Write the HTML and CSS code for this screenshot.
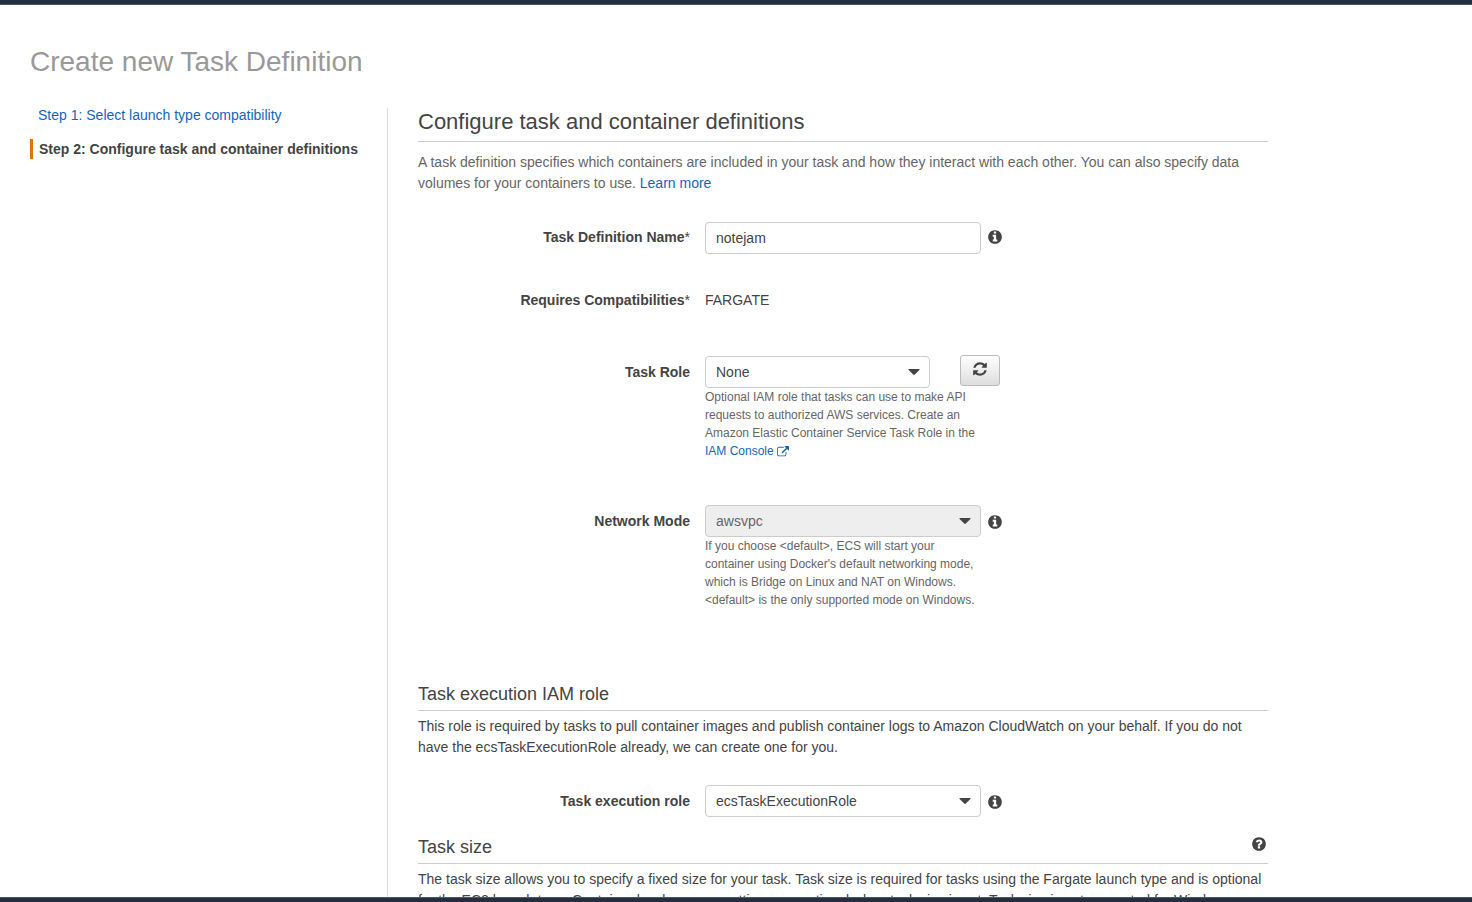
FILE: index.html
```html
<!DOCTYPE html>
<html lang="en">
<head>
<meta charset="utf-8">
<title>Create new Task Definition</title>
<link rel="stylesheet" href="styles.css">
</head>
<body>
<svg class="sprite" aria-hidden="true">
  <symbol id="info" viewBox="0 0 1792 1792"><path d="M1152 1376v-160q0-14-9-23t-23-9h-96v-512q0-14-9-23t-23-9h-320q-14 0-23 9t-9 23v160q0 14 9 23t23 9h96v320h-96q-14 0-23 9t-9 23v160q0 14 9 23t23 9h448q14 0 23-9t9-23zm-128-896v-160q0-14-9-23t-23-9h-192q-14 0-23 9t-9 23v160q0 14 9 23t23 9h192q14 0 23-9t9-23zm640 416q0 209-103 385.5t-279.5 279.5-385.5 103-385.5-103-279.5-279.5-103-385.5 103-385.5 279.5-279.5 385.5-103 385.5 103 279.5 279.5 103 385.5z"/></symbol>
  <symbol id="question" viewBox="0 0 1792 1792"><path d="M1024 1376v-192q0-14-9-23t-23-9h-192q-14 0-23 9t-9 23v192q0 14 9 23t23 9h192q14 0 23-9t9-23zm256-672q0-88-55.5-163t-138.5-116-170-41q-243 0-371 213-15 24 8 42l132 100q7 6 19 6 16 0 25-12 53-68 86-92 34-24 86-24 48 0 85.5 26t37.5 59q0 38-20 61t-68 45q-63 28-115.5 86.5t-52.5 125.5v36q0 14 9 23t23 9h192q14 0 23-9t9-23q0-19 21.5-49.5t54.5-49.5q32-18 49-28.5t46-35 44.5-48 28-60.5 12.5-81zm384 192q0 209-103 385.5t-279.5 279.5-385.5 103-385.5-103-279.5-279.5-103-385.5 103-385.5 279.5-279.5 385.5-103 385.5 103 279.5 279.5 103 385.5z"/></symbol>
  <symbol id="refresh" viewBox="0 0 1792 1792"><path d="M1639 1056q0 5-1 7-64 268-268 434.5t-478 166.5q-146 0-282.5-55t-243.5-157l-129 129q-19 19-45 19t-45-19-19-45v-448q0-26 19-45t45-19h448q26 0 45 19t19 45-19 45l-137 137q71 66 161 102t187 36q134 0 250-65t186-179q11-17 53-117 8-23 30-23h192q13 0 22.5 9.5t9.5 22.5zm25-800v448q0 26-19 45t-45 19h-448q-26 0-45-19t-19-45 19-45l138-138q-148-137-349-137-134 0-250 65t-186 179q-11 17-53 117-8 23-30 23h-199q-13 0-22.5-9.5t-9.5-22.5v-7q65-268 270-434.5t480-166.5q146 0 284 55.5t245 156.5l130-129q19-19 45-19t45 19 19 45z"/></symbol>
  <symbol id="external" viewBox="0 0 1792 1792"><path d="M1408 928v320q0 119-84.5 203.5t-203.5 84.5h-832q-119 0-203.5-84.5t-84.5-203.5v-832q0-119 84.5-203.5t203.5-84.5h704q14 0 23 9t9 23v64q0 14-9 23t-23 9h-704q-66 0-113 47t-47 113v832q0 66 47 113t113 47h832q66 0 113-47t47-113v-320q0-14 9-23t23-9h64q14 0 23 9t9 23zm384-864v512q0 26-19 45t-45 19-45-19l-176-176-652 652q-10 10-23 10t-23-10l-114-114q-10-10-10-23t10-23l652-652-176-176q-19-19-19-45t19-45 45-19h512q26 0 45 19t19 45z"/></symbol>
  <symbol id="caret" viewBox="0 0 12 6"><path d="M1 0h10q1 .3.4 1L6.8 5.6q-.8.7-1.6 0L.6 1Q0 .3 1 0z"/></symbol>
</svg>

<div class="page">
  <h1 class="page-title">Create new Task Definition</h1>
  <div class="wizard">
    <nav class="steps" aria-label="Steps">
      <a class="step" href="#step1">Step 1: Select launch type compatibility</a>
      <span class="step step-current" aria-current="step">Step 2: Configure task and container definitions</span>
    </nav>

    <main class="content">
      <h2 class="title">Configure task and container definitions</h2>
      <p class="intro">A task definition specifies which containers are included in your task and how they interact with each other. You can also specify data volumes for your containers to use. <a href="#learn">Learn more</a></p>

      <form class="form">
        <div class="row row-name">
          <label class="label" for="name">Task Definition Name<span class="star">*</span></label>
          <input class="control" id="name" type="text" value="notejam">
          <button class="hint" type="button" aria-label="About the task definition name"><svg class="icon"><use href="#info"/></svg></button>
        </div>

        <div class="row row-compat">
          <span class="label">Requires Compatibilities<span class="star">*</span></span>
          <span class="value">FARGATE</span>
        </div>

        <div class="row row-picker row-role">
          <label class="label" for="role">Task Role</label>
          <div class="field">
            <div class="picker picker-narrow">
              <select class="control" id="role"><option>None</option></select>
              <svg class="caret"><use href="#caret"/></svg>
            </div>
            <p class="help">Optional IAM role that tasks can use to make API requests to authorized AWS services. Create an Amazon Elastic Container Service Task Role in the <a href="#iam">IAM Console <svg class="external"><use href="#external"/></svg></a></p>
          </div>
          <button class="refresh" type="button" aria-label="Refresh roles"><svg class="icon"><use href="#refresh"/></svg></button>
        </div>

        <div class="row row-picker row-network">
          <label class="label" for="network">Network Mode</label>
          <div class="field">
            <div class="picker">
              <select class="control" id="network" disabled><option>awsvpc</option></select>
              <svg class="caret"><use href="#caret"/></svg>
            </div>
            <p class="help">If you choose &lt;default&gt;, ECS will start your container using Docker's default networking mode, which is Bridge on Linux and NAT on Windows. &lt;default&gt; is the only supported mode on Windows.</p>
          </div>
          <button class="hint" type="button" aria-label="About network mode"><svg class="icon"><use href="#info"/></svg></button>
        </div>

        <h3 class="section-title">Task execution IAM role</h3>
        <p class="section-text">This role is required by tasks to pull container images and publish container logs to Amazon CloudWatch on your behalf. If you do not have the ecsTaskExecutionRole already, we can create one for you.</p>

        <div class="row row-picker row-execution">
          <label class="label" for="execution">Task execution role</label>
          <div class="field">
            <div class="picker">
              <select class="control" id="execution"><option>ecsTaskExecutionRole</option></select>
              <svg class="caret"><use href="#caret"/></svg>
            </div>
          </div>
          <button class="hint" type="button" aria-label="About the task execution role"><svg class="icon"><use href="#info"/></svg></button>
        </div>

        <h3 class="section-title section-size">Task size
          <button class="hint-size" type="button" aria-label="About task size"><svg class="icon"><use href="#question"/></svg></button>
        </h3>
        <p class="section-text">The task size allows you to specify a fixed size for your task. Task size is required for tasks using the Fargate launch type and is optional for the EC2 launch type. Container level memory settings are optional when task size is set. Task size is not supported for Windows containers.</p>
      </form>
    </main>
  </div>
</div>
</body>
</html>
```
FILE: styles.css
```css
* {
  box-sizing: border-box;
}

body {
  display: flex;
  flex-direction: column;
  height: 100vh;
  margin: 0;
  border-top: 4px solid #232f3e;
  border-bottom: 4px solid #232f3e;
  background: #fff;
  color: #444;
  font: 14px/21px "Liberation Sans", Arial, sans-serif;
}

h1, h2, h3, p {
  margin: 0;
  font-weight: normal;
}

a {
  color: #1166bb;
  text-decoration: none;
}

button, input, select {
  font: inherit;
  color: inherit;
}

.sprite {
  position: absolute;
  width: 0;
  height: 0;
}

.page {
  flex: 1;
  min-height: 0;
  border-top: 1px solid #4f5965;
  border-bottom: 1px solid #4f5965;
  padding: 38px 30px 0;
  overflow-y: auto;
  scrollbar-width: none;
}

.page-title {
  margin-bottom: 27px;
  color: #999;
  font-size: 28px;
  line-height: 38px;
}

.wizard {
  display: flex;
}

.steps {
  display: flex;
  flex: 0 0 358px;
  flex-direction: column;
  gap: 17px;
  border-right: 1px solid #ddd;
}

.step {
  padding-left: 8px;
  line-height: 14px;
}

.step-current {
  border-left: 3px solid #e07700;
  padding-left: 6px;
  font-weight: bold;
  line-height: 20px;
}

.content {
  flex: 0 1 880px;
  padding-left: 30px;
}

.title {
  border-bottom: 1px solid #ccc;
  padding-bottom: 5px;
  font-size: 22px;
  line-height: 28px;
}

.intro {
  padding-top: 10px;
  color: #666;
}

.row {
  display: grid;
  grid-template-columns: 272px 276px auto;
  column-gap: 15px;
  align-items: start;
  justify-content: start;
}

.label {
  padding-top: 5px;
  font-weight: bold;
  text-align: right;
}

.star {
  font-weight: normal;
}

.control {
  display: block;
  width: 100%;
  height: 32px;
  border: 1px solid #ccc;
  border-radius: 4px;
  padding: 0 10px;
  background: #fff;
  appearance: none;
}

.control:disabled {
  background: #eee;
  color: #666;
  opacity: 1;
}

.picker {
  position: relative;
}

.picker-narrow {
  width: 225px;
}

.caret {
  position: absolute;
  top: 13px;
  right: 10px;
  width: 12px;
  height: 6px;
  fill: #444;
  pointer-events: none;
}

.help {
  color: #666;
  font-size: 12px;
  line-height: 18px;
}

.hint {
  display: flex;
  margin: 7px 0 0 -9px;
  border: 0;
  padding: 0;
  background: none;
}

.icon {
  width: 16px;
  height: 16px;
  fill: #444;
}

.external {
  width: 12px;
  height: 12px;
  fill: currentColor;
  vertical-align: -3px;
}

.row-name {
  padding-top: 28px;
}

.row-compat {
  padding-top: 31px;
}

.value {
  padding-top: 5px;
}

.row-picker .label {
  padding-top: 6px;
}

.row-picker .hint {
  margin-top: 9px;
}

.row-role,
.row-network {
  padding-top: 45px;
}

.refresh {
  display: flex;
  align-items: center;
  justify-content: center;
  width: 40px;
  height: 31px;
  margin: -1px 0 0 -36px;
  border: 1px solid #bbb;
  border-radius: 3px;
  padding: 0 0 3px;
  background: linear-gradient(#fff, #ddd);
}

.section-title {
  display: flex;
  justify-content: space-between;
  margin-top: 73px;
  border-bottom: 1px solid #ccc;
  padding-bottom: 4px;
  font-size: 18px;
  line-height: 24px;
}

.section-text {
  padding-top: 5px;
}

.row-execution {
  padding-top: 27px;
}

.section-size {
  margin-top: 18px;
}

.hint-size {
  display: flex;
  align-self: start;
  border: 0;
  padding: 1px 1px 0;
  background: none;
}
```
